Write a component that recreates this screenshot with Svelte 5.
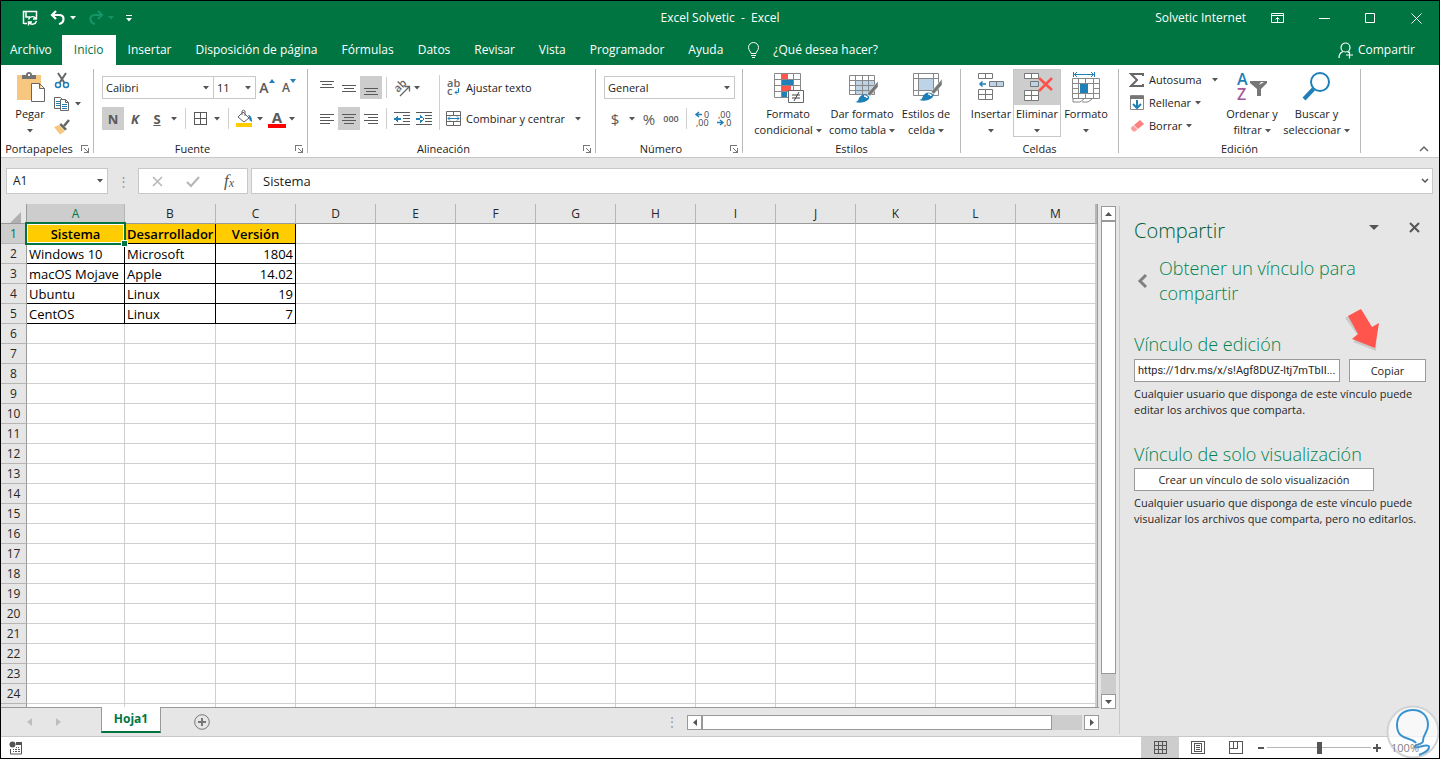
<script>
    const tabs = ["Archivo", "Inicio", "Insertar", "Disposición de página", "Fórmulas", "Datos", "Revisar", "Vista", "Programador", "Ayuda"];
    let activeTab = $state("Inicio");

    const columns = "ABCDEFGHIJKLM".split("");
    const rows = Array.from({ length: 24 }, (_, i) => i + 1);

    // Sheet content, only the first five rows are filled
    const data = [
        ["Sistema", "Desarrollador", "Versión"],
        ["Windows 10", "Microsoft", "1804"],
        ["macOS Mojave", "Apple", "14.02"],
        ["Ubuntu", "Linux", "19"],
        ["CentOS", "Linux", "7"],
    ];

    let formula = $state("Sistema");
    let link = $state("https://1drv.ms/x/s!Agf8DUZ-ltj7mTbII...");
    let zoom = $state(100);
</script>

{#snippet caret()}
    <svg class="caret" width="6" height="4" viewBox="0 0 6 4"><path d="M0 0h6L3 3.5z" fill="currentColor" /></svg>
{/snippet}

{#snippet launcher()}
    <button class="launcher" aria-label="Más opciones">
        <svg width="8" height="8" viewBox="0 0 8 8" fill="none" stroke="#777" shape-rendering="crispEdges">
            <path d="M.5 6V.5H7M7.5 3v4.5H3M3 3l4 4" />
        </svg>
    </button>
{/snippet}

{#snippet lines(a, b, top)}
    <!-- three or four text strokes, a = long, b = short -->
    <svg width="14" height="14" viewBox="0 0 14 14" stroke="#595959" shape-rendering="crispEdges">
        {#each top as y, i}
            <line x1={i % 2 ? b[0] : a[0]} x2={i % 2 ? b[1] : a[1]} y1={y + 0.5} y2={y + 0.5} />
        {/each}
    </svg>
{/snippet}

<div class="window">
    <header class="top">
        <div class="titlebar">
            <div class="quick">
                <button aria-label="Guardar">
                    <svg width="16" height="16" viewBox="0 0 16 16" fill="none" stroke="#fff">
                        <path d="M1.5 14V1.5h13V6M4 2v5h4M2 13.5h3" stroke-width="1.5" />
                        <path d="M6.5 9.5a4.200 4.200 0 0 1 7.500-1M14.500 5.500v3.500H11M14.500 11a4.200 4.200 0 0 1-7.500 1.500M6.500 15.500V12H10" stroke-width="1.4" />
                    </svg>
                </button>
                <button aria-label="Deshacer">
                    <svg width="16" height="16" viewBox="0 0 16 16" fill="none" stroke="#fff" stroke-width="2.2">
                        <path d="M6 1 2 5l4 4M2 5h7q4.500 0 4.500 4T9 14" />
                    </svg>
                    {@render caret()}
                </button>
                <button class="dim" aria-label="Rehacer">
                    <svg width="16" height="16" viewBox="0 0 16 16" fill="none" stroke="currentColor" stroke-width="2.2">
                        <path d="m10 1 4 4-4 4M14 5H7q-4.500 0-4.500 4T7 14" />
                    </svg>
                    {@render caret()}
                </button>
                <button aria-label="Personalizar">
                    <svg width="6" height="7" viewBox="0 0 6 7" fill="#fff"><path d="M0 0h6v1H0zM0 3h6L3 6.500z" /></svg>
                </button>
            </div>
            <h1>Excel Solvetic&nbsp; -&nbsp; Excel</h1>
            <div class="account">
                <span>Solvetic Internet</span>
                <button aria-label="Opciones de la cinta">
                    <svg width="14" height="11" viewBox="0 0 14 11" fill="none" stroke="#fff"><path d="M.5.5h12v9H.5zM.5 2.500h12M6.500 9V4.500M4.500 6.500l2-2 2 2" /></svg>
                </button>
                <button aria-label="Minimizar">
                    <svg width="11" height="11" viewBox="0 0 11 11" stroke="#fff"><path d="M0 5.500h11" /></svg>
                </button>
                <button aria-label="Maximizar">
                    <svg width="11" height="11" viewBox="0 0 11 11" fill="none" stroke="#fff"><path d="M.5.5h9v9h-9z" /></svg>
                </button>
                <button aria-label="Cerrar">
                    <svg width="11" height="11" viewBox="0 0 11 11" stroke="#fff"><path d="m.5.5 10 10M10.500.5l-10 10" /></svg>
                </button>
            </div>
        </div>
        <nav class="tabs">
            {#each tabs as tab}
                <button class="tab" class:active={activeTab === tab} onclick={() => (activeTab = tab)}>{tab}</button>
            {/each}
            <button class="tell">
                <svg width="13" height="17" viewBox="0 0 13 17" fill="none" stroke="#fff"><path d="M4 11.500c0-2-2.500-3-2.500-6a5 5 0 0 1 10 0c0 3-2.500 4-2.500 6zM4 13.500h5M5 15.500h3" /></svg>
                ¿Qué desea hacer?
            </button>
            <button class="share">
                <svg width="16" height="17" viewBox="0 0 16 17" fill="none" stroke="#fff" stroke-width="1.2"><circle cx="7.500" cy="5.500" r="4.500" /><path d="M1 16q0-5 4-6.500M9.500 9.500l2 1.500M8 13h7M11.500 9.500v7" /></svg>
                Compartir
            </button>
        </nav>
    </header>

    <div class="ribbon">
        <section class="group clipboard">
            <div class="body">
                <button class="big paste">
                    <svg width="32" height="32" viewBox="0 0 32 32">
                        <path d="M3 3h24v25H3z" fill="#f8c77f" />
                        <path d="M8 7V3h4q0-3 3-3t3 3h4v4z" fill="#737373" /><path d="M14 2h2v2h-2z" fill="#fff" />
                        <path d="M17.500 11.500h8l5 5v13h-13zM25.500 11.500v5h5" fill="#fff" stroke="#666" />
                    </svg>
                    <span>Pegar<br />{@render caret()}</span>
                </button>
                <div class="stack">
                    <button aria-label="Cortar">
                        <svg width="16" height="16" viewBox="0 0 16 16" fill="none">
                            <path d="m4 0 6.500 10M12 0 5.500 10" stroke="#666" stroke-width="2" />
                            <circle cx="4" cy="12" r="2.500" stroke="#1f7fb8" stroke-width="1.5" /><circle cx="12" cy="12" r="2.500" stroke="#1f7fb8" stroke-width="1.5" />
                        </svg>
                    </button>
                    <button aria-label="Copiar">
                        <svg width="16" height="16" viewBox="0 0 16 16" fill="#fff">
                            <path d="M.5 1.500h6l3 3v8h-9z" stroke="#666" /><path d="M2 5.500h4M2 7.500h4M2 9.500h4" stroke="#1f7fb8" />
                            <path d="M6.500 3.500h5l3 3v8h-8zM11.500 3.500v3h3" stroke="#666" /><path d="M8 8.500h5M8 10.500h5M8 12.500h5" stroke="#1f7fb8" />
                        </svg>
                        {@render caret()}
                    </button>
                    <button aria-label="Copiar formato">
                        <svg width="16" height="16" viewBox="0 0 16 16">
                            <path d="m0 8 5-2 6 6-5 3.500z" fill="#f8c77f" /><path d="m7 4 6 6-2 1.500L5.500 6z" fill="#666" /><path d="m10 7 5-6" stroke="#666" stroke-width="2.5" />
                        </svg>
                    </button>
                </div>
            </div>
            <h2>Portapapeles</h2>
            {@render launcher()}
        </section>
        <i class="divider"></i>

        <section class="group font">
            <div class="body rows">
                <div class="row">
                    <select class="fontname" aria-label="Fuente"><option>Calibri</option></select>
                    <select class="fontsize" aria-label="Tamaño"><option>11</option></select>
                    <button class="tool up" aria-label="Aumentar tamaño">A<svg width="6" height="4" viewBox="0 0 6 4"><path d="M0 4h6L3 0z" fill="#1f7fb8" /></svg></button>
                    <button class="tool up small" aria-label="Disminuir tamaño">A<svg width="6" height="4" viewBox="0 0 6 4"><path d="M0 0h6L3 4z" fill="#1f7fb8" /></svg></button>
                </div>
                <div class="row">
                    <button class="tool on"><b>N</b></button>
                    <button class="tool"><b><em>K</em></b></button>
                    <button class="tool"><b><u>S</u></b></button>
                    <button class="drop" aria-label="Subrayado">{@render caret()}</button>
                    <i class="bar"></i>
                    <button class="tool icon" aria-label="Bordes">
                        <svg width="14" height="14" viewBox="0 0 14 14" fill="none" stroke="#595959" shape-rendering="crispEdges"><path d="M.5.5h12v12H.5zM6.500.5v12M.5 6.500h12" /></svg>
                    </button>
                    <button class="drop" aria-label="Más bordes">{@render caret()}</button>
                    <i class="bar"></i>
                    <button class="tool icon" aria-label="Color de relleno">
                        <svg width="16" height="17" viewBox="0 0 16 17" fill="none">
                            <path d="m2 7 5-5 6 6-5 4zM6 5V1q1.500-1.500 3 0v5" stroke="#666" /><path d="M12 5q4 0 4 7-3-1-3-5z" fill="#1f7fb8" /><path d="M0 13h16v4H0z" fill="#ffcc00" />
                        </svg>
                    </button>
                    <button class="drop" aria-label="Más colores de relleno">{@render caret()}</button>
                    <button class="tool icon color-a" aria-label="Color de fuente"><b>A</b></button>
                    <button class="drop" aria-label="Más colores de fuente">{@render caret()}</button>
                </div>
            </div>
            <h2>Fuente</h2>
            {@render launcher()}
        </section>
        <i class="divider"></i>

        <section class="group align">
            <div class="body">
                <div class="rows left">
                    <div class="row">
                        <button class="tool" aria-label="Alinear arriba">{@render lines([0, 14], [2, 12], [0, 3, 6])}</button>
                        <button class="tool" aria-label="Alinear en medio">{@render lines([0, 14], [2, 12], [4, 7, 10])}</button>
                        <button class="tool on" aria-label="Alinear abajo">{@render lines([0, 14], [2, 12], [7, 10, 13])}</button>
                        <i class="bar"></i>
                        <button class="tool icon" aria-label="Orientación">
                            <svg width="17" height="16" viewBox="0 0 17 16" fill="none" stroke="#666">
                                <text transform="translate(5 13) rotate(-45)" font-size="11" font-weight="600" fill="#666" stroke="none">ab</text>
                                <path d="m7 16 9-9M11.500 6.500h5v5" stroke-width="1.3" />
                            </svg>
                        </button>
                        <button class="drop" aria-label="Más orientaciones">{@render caret()}</button>
                    </div>
                    <div class="row">
                        <button class="tool" aria-label="Izquierda">{@render lines([0, 14], [0, 10], [2, 5, 8, 11])}</button>
                        <button class="tool on" aria-label="Centrar">{@render lines([0, 14], [2, 12], [2, 5, 8, 11])}</button>
                        <button class="tool" aria-label="Derecha">{@render lines([0, 14], [4, 14], [2, 5, 8, 11])}</button>
                        <i class="bar"></i>
                        <button class="tool" aria-label="Disminuir sangría">
                            <svg width="16" height="14" viewBox="0 0 16 14" shape-rendering="crispEdges"><path d="M0 .5h16M9 3.500h7M9 6.500h7M9 9.500h7M0 12.500h16" stroke="#595959" /><path d="M0 6h7v2H0zM0 7l4-4v8z" fill="#1f7fb8" /></svg>
                        </button>
                        <button class="tool" aria-label="Aumentar sangría">
                            <svg width="16" height="14" viewBox="0 0 16 14" shape-rendering="crispEdges"><path d="M0 .5h16M9 3.500h7M9 6.500h7M9 9.500h7M0 12.500h16" stroke="#595959" /><path d="M0 6h7v2H0zM8 7 4 3v8z" fill="#1f7fb8" /></svg>
                        </button>
                    </div>
                </div>
                <i class="bar tall"></i>
                <div class="rows right">
                    <button class="row text">
                        <svg width="16" height="17" viewBox="0 0 16 17"><g font-size="11" font-weight="600" fill="#666"><text x="1" y="8">ab</text><text x="1" y="16">c</text></g><path d="M12.500 9v4.500H9M11 11.500l-2 2 2 2" fill="none" stroke="#1f7fb8" /></svg>
                        Ajustar texto
                    </button>
                    <button class="row text">
                        <svg width="16" height="16" viewBox="0 0 16 16" fill="none" stroke="#666"><path d="M.5.5h14v14H.5zM.5 4.500h14M.5 10.500h14M7.500.5v4M7.500 10.500v4" /><path d="M2 7.500h11M4 5.500l-2 2 2 2M11 5.500l2 2-2 2" stroke="#1f7fb8" /></svg>
                        Combinar y centrar
                        <span class="push">{@render caret()}</span>
                    </button>
                </div>
            </div>
            <h2>Alineación</h2>
            {@render launcher()}
        </section>
        <i class="divider"></i>

        <section class="group number">
            <div class="body rows">
                <div class="row">
                    <select class="format" aria-label="Formato de número"><option>General</option></select>
                </div>
                <div class="row">
                    <button class="tool sign">$</button>
                    <button class="drop" aria-label="Más monedas">{@render caret()}</button>
                    <button class="tool sign">%</button>
                    <button class="tool zeros">000</button>
                    <i class="bar"></i>
                    <button class="tool" aria-label="Aumentar decimales">
                        <svg width="15" height="15" viewBox="0 0 15 15"><g font-size="9" fill="#444"><text x="9" y="7">0</text><text x="1" y="15">,00</text></g><path d="M1 3.500h6M4 1 1 3.500 4 6" fill="none" stroke="#1f7fb8" stroke-width="1.5" /></svg>
                    </button>
                    <button class="tool" aria-label="Disminuir decimales">
                        <svg width="15" height="15" viewBox="0 0 15 15"><g font-size="9" fill="#444"><text x="1" y="7">,00</text><text x="7" y="15">,0</text></g><path d="M0 11.500h6M3 9l3 2.500L3 14" fill="none" stroke="#1f7fb8" stroke-width="1.5" /></svg>
                    </button>
                </div>
            </div>
            <h2>Número</h2>
            {@render launcher()}
        </section>
        <i class="divider"></i>

        <section class="group styles">
            <div class="body">
                <button class="big wide">
                    <svg width="32" height="32" viewBox="0 0 32 32">
                        <path d="M2.500 1.500h26v24h-26zM2.500 7.500h26M2.500 13.500h26M2.500 19.500h26M9.500 1.500v24M21.500 1.500v24" fill="#fff" stroke="#888" />
                        <path d="M10 2h6v5h-6zM10 14h9v5h-9z" fill="#ff554d" /><path d="M10 8h11v5H10zM10 20h5v5h-5z" fill="#1f7fb8" />
                        <path d="M16.500 18.500h15v12h-15z" fill="#fff" stroke="#666" /><path d="M20 23h8M20 26h8M27 20l-5 9" stroke="#444" />
                    </svg>
                    <span>Formato<br />condicional {@render caret()}</span>
                </button>
                <button class="big wide">
                    <svg width="32" height="32" viewBox="0 0 32 32">
                        <path d="M3.500 3.500h25v19h-25z" fill="#fff" /><path d="M9 8h19v14H9z" fill="#bcd3e8" />
                        <path d="M3.500 3.500h25v19h-25zM3.500 8.500h25M3.500 13.500h25M3.500 18.500h25M9.500 3.500v19M16.500 3.500v19M22.500 3.500v19" fill="none" stroke="#888" />
                        <path d="m21 22 11-13v6l-8 9z" fill="#777" stroke="#fff" stroke-width=".5" /><path d="M9 30q3 0 4-4 3-5 8-3 4 2 1 5-5 4-13 2z" fill="#1f7fb8" /><path d="M18 24q3 0 3 2" stroke="#fff" fill="none" stroke-width="1.5" />
                    </svg>
                    <span>Dar formato<br />como tabla {@render caret()}</span>
                </button>
                <button class="big style">
                    <svg width="32" height="32" viewBox="0 0 32 32">
                        <path d="M3.500 1.500h25v22h-25z" fill="#fff" /><path d="M9 7h14v11H9z" fill="#bcd3e8" />
                        <path d="M3.500 1.500h25v22h-25zM3.500 6.500h25M3.500 18.500h25M8.500 1.500v22M23.500 1.500v22" fill="none" stroke="#888" />
                        <path d="m21 20 11-13v6l-8 9z" fill="#777" stroke="#fff" stroke-width=".5" /><path d="M9 28q3 0 4-4 3-5 8-3 4 2 1 5-5 4-13 2z" fill="#1f7fb8" /><path d="M18 22q3 0 3 2" stroke="#fff" fill="none" stroke-width="1.5" />
                    </svg>
                    <span>Estilos de<br />celda {@render caret()}</span>
                </button>
            </div>
            <h2>Estilos</h2>
        </section>
        <i class="divider"></i>

        <section class="group cells">
            <div class="body">
                <button class="big insert">
                    <svg width="32" height="32" viewBox="0 0 32 32" fill="#fff" stroke="#777">
                        <path d="M3.500 1.500h14v5h-14zM10.500 1.500v5M3.500 17.500h14v10h-14zM3.500 22.500h14M10.500 17.500v10" />
                        <path d="M14.500 9.500h14v5h-14zM21.500 9.500v5" fill="#bcd3e8" /><path d="M5 12h6M7.500 9.500 5 12l2.500 2.500" fill="none" stroke="#1f7fb8" stroke-width="1.5" />
                    </svg>
                    <span>Insertar<br />{@render caret()}</span>
                </button>
                <button class="big delete">
                    <svg width="32" height="32" viewBox="0 0 32 32" fill="#fff" stroke="#777">
                        <path d="M3.500 1.500h14v5h-14zM10.500 1.500v5M3.500 18.500h14v10h-14zM3.500 23.500h14M10.500 18.500v10" />
                        <path d="M9.500 9.500h8v5h-8z" fill="#bcd3e8" /><path d="m18 6 13 12M31 6 18 19" fill="none" stroke="#ff5147" stroke-width="2.5" />
                    </svg>
                    <span>Eliminar<br />{@render caret()}</span>
                </button>
                <button class="big size">
                    <svg width="32" height="32" viewBox="0 0 32 32" fill="none" stroke="#888">
                        <path d="M2.500 6.500h27v20h-27zM2.500 11.500h27M2.500 21.500h27M8.500 6.500v20M23.500 6.500v20M15.500 6.500v5M15.500 21.500v5M2.500 16.500h6M23.500 16.500h6M3 27v3h7l4-3M12 30h6l4-3" />
                        <path d="M10 12h8v9h-8z" fill="#1f7fb8" stroke="none" /><path d="M3.500 0v5M24.500 0v5M4 2.500h20M7 0 4.500 2.500 7 5M21 0l2.500 2.500L21 5" stroke="#1f7fb8" />
                    </svg>
                    <span>Formato<br />{@render caret()}</span>
                </button>
            </div>
            <h2>Celdas</h2>
        </section>
        <i class="divider"></i>

        <section class="group edit">
            <div class="body">
                <div class="list">
                    <button>
                        <svg width="16" height="16" viewBox="0 0 16 16" fill="none" stroke="#666" stroke-width="2"><path d="M14 4V2H2l6 6-6 6h12v-2" /></svg>
                        Autosuma <span class="push">{@render caret()}</span>
                    </button>
                    <button>
                        <svg width="16" height="16" viewBox="0 0 16 16" fill="none"><path d="M1.500.5h13v14h-13z" stroke="#888" /><path d="M1 1h14v3H1z" fill="#777" /><path d="M8 5v8M4 9l4 4 4-4" stroke="#1f7fb8" stroke-width="2" /></svg>
                        Rellenar {@render caret()}
                    </button>
                    <button>
                        <svg width="16" height="16" viewBox="0 0 16 16"><path d="m5 7 6-5 4 4-6 5z" fill="#ff8080" /><path d="m2 9.500 2.500-2 4 4-2.500 2H4L2 11z" fill="#ff9c9c" /></svg>
                        Borrar {@render caret()}
                    </button>
                </div>
                <button class="big sort">
                    <svg width="32" height="32" viewBox="0 0 32 32">
                        <g font-size="16" font-weight="600"><text x="1" y="13" fill="#1f7fb8">A</text><text x="1" y="28" fill="#a8589e">Z</text></g>
                        <path d="M14 9h17v2l-6 6v7h-4v-7l-7-6z" fill="#777" /><path d="m23 13 5-3h-3z" fill="#fff" />
                    </svg>
                    <span>Ordenar y<br />filtrar {@render caret()}</span>
                </button>
                <button class="big find">
                    <svg width="32" height="32" viewBox="0 0 32 32" fill="none" stroke="#1f7fb8"><circle cx="19" cy="10" r="9" stroke-width="2" /><path d="M12.500 17 3 27" stroke-width="4" /></svg>
                    <span>Buscar y<br />seleccionar {@render caret()}</span>
                </button>
            </div>
            <h2>Edición</h2>
        </section>
        <i class="divider"></i>
        <button class="collapse" aria-label="Contraer la cinta">
            <svg width="10" height="6" viewBox="0 0 10 6" fill="none" stroke="#666" stroke-width="1.5"><path d="m1 5 4-4 4 4" /></svg>
        </button>
    </div>

    <div class="formulabar">
        <select class="namebox" aria-label="Cuadro de nombres"><option>A1</option></select>
        <span class="grip">⋮</span>
        <div class="fx">
            <button aria-label="Cancelar"><svg width="11" height="11" viewBox="0 0 11 11" stroke="#b5b5b5" stroke-width="1.5"><path d="m1 1 9 9M10 1l-9 9" /></svg></button>
            <button aria-label="Introducir"><svg width="14" height="11" viewBox="0 0 14 11" fill="none" stroke="#b5b5b5" stroke-width="2"><path d="m1 6 4 4 8-9" /></svg></button>
            <button class="fn" aria-label="Insertar función"><em>f</em><small>x</small></button>
        </div>
        <div class="formula">
            <input aria-label="Fórmula" bind:value={formula} />
            <svg width="8" height="6" viewBox="0 0 8 6" fill="none" stroke="#555" stroke-width="1.5"><path d="m1 1 3 3 3-3" /></svg>
        </div>
    </div>

    <div class="workspace">
        <main class="book">
            <div class="sheetrow">
                <div class="sheet">
                    <table>
                        <colgroup>
                            <col class="c-head" /><col class="c-a" /><col class="c-b" />
                            {#each columns.slice(2) as _}<col class="c-n" />{/each}
                            <col />
                        </colgroup>
                        <thead>
                            <tr>
                                <th class="corner"><svg width="11" height="11" viewBox="0 0 11 11"><path d="M11 0v11H0z" fill="#b0b0b0" /></svg></th>
                                {#each columns as col}<th class:sel={col === "A"}>{col}</th>{/each}
                                <th></th>
                            </tr>
                        </thead>
                        <tbody>
                            {#each rows as n, r}
                                <tr class:first={r === 0}>
                                    <th class:sel={n === 1}>{n}</th>
                                    {#each columns as _, c}
                                        <td class:cell={r < data.length && c < 3} class:num={c === 2} class:cursor={r === 0 && c === 0}>{data[r]?.[c] ?? ""}</td>
                                    {/each}
                                    <td></td>
                                </tr>
                            {/each}
                            <tr>
                                <th></th>
                                {#each columns as _}<td></td>{/each}
                                <td></td>
                            </tr>
                        </tbody>
                    </table>
                </div>
                <div class="vscroll">
                    <button aria-label="Subir"><svg width="7" height="4" viewBox="0 0 7 4"><path d="M0 4h7L3.500 0z" fill="#555" /></svg></button>
                    <div class="thumb"></div>
                    <div class="track"></div>
                    <button aria-label="Bajar"><svg width="7" height="4" viewBox="0 0 7 4"><path d="M0 0h7L3.500 4z" fill="#555" /></svg></button>
                </div>
            </div>
            <div class="sheettabs">
                <div class="arrows">
                    <svg width="5" height="8" viewBox="0 0 5 8"><path d="M5 0v8L0 4z" fill="#bdbdbd" /></svg>
                    <svg width="5" height="8" viewBox="0 0 5 8"><path d="M0 0v8l5-4z" fill="#bdbdbd" /></svg>
                </div>
                <button class="sheettab">Hoja1</button>
                <button class="add" aria-label="Hoja nueva">
                    <svg width="16" height="16" viewBox="0 0 16 16" fill="none" stroke="#777"><circle cx="8" cy="8" r="7.300" /><path d="M4 8h8M8 4v8" stroke-width="2" /></svg>
                </button>
                <span class="grip">⋮</span>
                <div class="hscroll">
                    <button aria-label="Izquierda"><svg width="4" height="7" viewBox="0 0 4 7"><path d="M4 0v7L0 3.500z" fill="#555" /></svg></button>
                    <div class="thumb"></div>
                    <div class="track"></div>
                    <button aria-label="Derecha"><svg width="4" height="7" viewBox="0 0 4 7"><path d="M0 0v7l4-3.500z" fill="#555" /></svg></button>
                </div>
            </div>
        </main>

        <aside class="pane">
            <div class="panehead">
                <h3>Compartir</h3>
                <button aria-label="Opciones del panel"><svg width="10" height="5" viewBox="0 0 10 5"><path d="M0 0h10L5 5z" fill="#555" /></svg></button>
                <button aria-label="Cerrar panel"><svg width="11" height="11" viewBox="0 0 11 11" stroke="#555" stroke-width="2"><path d="m1 1 9 9M10 1l-9 9" /></svg></button>
            </div>
            <div class="back">
                <button aria-label="Atrás"><svg width="11" height="16" viewBox="0 0 11 16" fill="none" stroke="#808080" stroke-width="3"><path d="M9 2 3 8l6 6" /></svg></button>
                <h3>Obtener un vínculo para compartir</h3>
            </div>
            <h4><label for="link">Vínculo de edición</label></h4>
            <div class="linkrow">
                <input id="link" bind:value={link} />
                <button class="btn copy">Copiar</button>
                <svg class="pointer" width="36" height="44" viewBox="0 0 36 44">
                    <path d="M1 9 15 1 25 21l8-4-1 25L9 33l6-5z" fill="#cacaca" />
                    <path d="M4 7 17 0l11 18 7-4-4 25-23-9 6-5z" fill="#ff554d" />
                </svg>
            </div>
            <p>Cualquier usuario que disponga de este vínculo puede editar los archivos que comparta.</p>
            <h4 class="second">Vínculo de solo visualización</h4>
            <button class="btn create">Crear un vínculo de solo visualización</button>
            <p>Cualquier usuario que disponga de este vínculo puede visualizar los archivos que comparta, pero no editarlos.</p>
        </aside>
    </div>

    <footer class="status">
        <button class="macro" aria-label="Grabar macro">
            <svg width="14" height="14" viewBox="0 0 14 14"><circle cx="3.500" cy="3.500" r="3" fill="#555" /><path d="M7 1h6v3H7z" fill="#555" /><path d="M1.500 8v5h11V4" fill="none" stroke="#555" /><path d="M7 6.500h1M9 6.500h1M4 8.500h1M6 8.500h2M9 8.500h2M4 10.500h1M6 10.500h2M9 10.500h2" stroke="#555" /></svg>
        </button>
        <button class="view on" aria-label="Normal"><svg width="13" height="13" viewBox="0 0 13 13" fill="none" stroke="#555" shape-rendering="crispEdges"><path d="M.5.5h12v12H.5zM4.500.5v12M8.500.5v12M.5 4.500h12M.5 8.500h12" /></svg></button>
        <button class="view" aria-label="Diseño de página"><svg width="14" height="13" viewBox="0 0 14 13" fill="none" stroke="#555" shape-rendering="crispEdges"><path d="M.5.5h13v12H.5zM3.500 2.500h7v8h-7zM5 4.500h4M5 6.500h4M5 8.500h4" /></svg></button>
        <button class="view" aria-label="Salto de página"><svg width="14" height="13" viewBox="0 0 14 13" fill="none" stroke="#555" shape-rendering="crispEdges"><path d="M.5.5h13v12H.5zM.5 7.500h8M4.500.5v7M8.500.5v7" /></svg></button>
        <button class="step" aria-label="Alejar"><svg width="8" height="8" viewBox="0 0 8 8"><path d="M1 3h6v2H1z" fill="#555" /></svg></button>
        <input type="range" min="0" max="200" aria-label="Zoom" bind:value={zoom} />
        <button class="step" aria-label="Acercar"><svg width="8" height="8" viewBox="0 0 8 8"><path d="M0 3h8v2H0zM3 0h2v8H3z" fill="#555" /></svg></button>
        <span class="percent">{zoom}%</span>
    </footer>

    <div class="badge">
        <svg width="54" height="54" viewBox="0 0 54 54" fill="none">
            <circle cx="27" cy="27" r="25.500" fill="#fff" fill-opacity=".7" stroke="#cfd3d6" stroke-width="2" />
            <path d="M30 38C26 32 11 36 11 20 11 10 18 5 27 5s15 6 15 15c0 8-5 9-5 16 0 4-9 3-8 6 1 2 14-4 14 0s-5 6-10 8" stroke="#3a93cf" stroke-width="2" />
        </svg>
    </div>
</div>

<style>
    :global(body) {
        margin: 0;
        font-family: "Open Sans", "Noto Sans", sans-serif;
        font-size: 12px;
        line-height: 16px;
        color: #1c1c1c;
    }

    button, input, select {
        font: inherit;
        color: inherit;
        margin: 0;
        padding: 0;
        border: 0;
        border-radius: 0;
        background: none;
        box-sizing: border-box;
    }
    button { display: flex; align-items: center; justify-content: center; white-space: nowrap; }
    svg { flex: none; display: block; overflow: visible; }
    h1, h2, h3, h4, p { margin: 0; font-weight: 400; font-size: inherit; }
    .caret { display: inline-block; vertical-align: middle; color: #555; }

    .window {
        position: relative;
        display: flex;
        flex-direction: column;
        height: 100vh;
        box-sizing: border-box;
        border: 1px solid #000;
        background: #e6e6e6;
        overflow: hidden;
    }

    /* === TITLE AND TABS === */
    .top { flex: none; background: #007542; color: #fff; }
    .top .caret { color: inherit; }
    .titlebar {
        display: grid;
        grid-template-columns: 1fr auto 1fr;
        align-items: center;
        height: 34px;
    }
    .quick { display: flex; align-items: center; gap: 12px; padding-left: 21px; }
    .quick button { gap: 4px; }
    .quick .dim { color: #129665; }
    .account { display: flex; align-items: center; justify-content: flex-end; }
    .account span { margin-right: 9px; }
    .account button { width: 46px; height: 30px; }
    .tabs { display: flex; height: 30px; }
    .tab { padding: 0 12px; }
    .tab:first-child { padding: 0 10px 0 9px; }
    .tab.active { background: #fff; color: #007542; }
    .tell { gap: 13px; margin-left: 12px; }
    .share { gap: 4px; margin-left: auto; padding-right: 24px; }

    /* === RIBBON === */
    .ribbon {
        flex: none;
        display: flex;
        height: 92px;
        background: #fff;
        border-bottom: 1px solid #c8c8c8;
        font-size: 11px;
    }
    .divider { flex: none; width: 1px; height: 84px; margin-top: 4px; background: #b9b9b9; }
    .group {
        flex: none;
        display: grid;
        grid-template: 72px 16px / 1fr auto;
        box-sizing: border-box;
        padding-top: 4px;
    }
    .group h2 { grid-column: 1; text-align: center; }
    .body { grid-column: 1 / 3; display: flex; padding-left: 8px; }
    .launcher { width: 16px; }
    .clipboard { width: 92px; }
    .font { width: 213px; }
    .align { width: 287px; }
    .number { width: 146px; }
    .styles { width: 217px; }
    .cells { width: 157px; }
    .edit { width: 241px; }
    .clipboard .body { padding-left: 5px; }

    .big { flex-direction: column; justify-content: flex-start; gap: 2px; padding-top: 3px; text-align: center; }
    .paste { width: 48px; }
    .wide { width: 74px; }
    .style { width: 54px; }
    .insert { width: 44px; }
    .delete {
        width: 48px;
        height: 68px;
        padding-top: 2px;
        border: 1px solid #c8c8c8;
        background: linear-gradient(#cdcdcd 35px, #fff 35px);
    }
    .size { width: 50px; }
    .sort { width: 60px; }
    .find { width: 69px; }

    .stack { display: flex; flex-direction: column; }
    .stack button { height: 23px; gap: 5px; justify-content: flex-start; }

    .rows { display: flex; flex-direction: column; gap: 8px; padding-top: 7px; }
    .row { display: flex; align-items: center; height: 23px; }
    .tool { width: 22px; height: 23px; font-size: 13px; color: #595959; }
    .tool.on { background: #cdcdcd; }
    .tool.icon { width: 20px; }
    .drop { width: 12px; height: 23px; }
    .tool.up { align-items: flex-start; font-weight: 600; font-size: 14px; line-height: 23px; }
    .tool.up svg { margin-top: 3px; }
    .tool.up.small { font-size: 12px; }
    .color-a { border-bottom: 4px solid #ff0000; height: 18px; margin-left: 2px; }
    .tool.color-a { width: 18px; font-size: 15px; }
    .tool.sign { font-size: 15px; }
    .tool.zeros { font-size: 9px; font-weight: 600; }
    .bar { flex: none; width: 1px; height: 21px; margin: 0 5px; background: #cfcfcf; }
    .align .bar, .number .bar { margin: 0 4px; }
    .align .tall { height: 55px; margin: 6px 0 0; }
    .left { width: 123px; }
    .right { padding-left: 6px; }
    .text { gap: 4px; justify-content: flex-start; }
    .push { margin-left: 6px; }
    .caret, .push { line-height: 4px; }

    select {
        appearance: none;
        height: 23px;
        padding: 0 3px;
        border: 1px solid #c8c8c8;
        background: #fff url("data:image/svg+xml,%3Csvg xmlns='http://www.w3.org/2000/svg' width='6' height='4'%3E%3Cpath d='M0 0h6L3 3.5z' fill='%23555'/%3E%3C/svg%3E") no-repeat right 4px center;
    }
    .fontname { width: 112px; }
    .fontsize { width: 43px; margin-left: -1px; }
    .format { width: 131px; }

    .list { width: 95px; margin-top: -1px; }
    .list button { width: 95px; height: 23px; gap: 4px; padding-left: 2px; justify-content: flex-start; }
    .collapse { margin: auto 10px 5px auto; }

    /* === FORMULA BAR === */
    .formulabar { flex: none; display: flex; padding: 10px 6px 10px 5px; font-size: 13px; }
    .namebox { width: 102px; height: 26px; padding-left: 6px; font-size: 12px; }
    .grip { width: 30px; text-align: center; line-height: 26px; color: #999; }
    .fx { display: flex; width: 110px; box-sizing: border-box; border: 1px solid #c8c8c8; background: #fff; margin-right: 3px; }
    .fx button { flex: 1; }
    .fn { font-family: "Liberation Serif", serif; font-size: 17px; color: #555; }
    .fn small { font-size: 12px; font-style: italic; margin-top: 4px; }
    .formula { flex: 1; display: flex; align-items: center; padding: 0 3px 0 11px; border: 1px solid #c8c8c8; background: #fff; }
    .formula input { flex: 1; height: 24px; outline: 0; }

    /* === SHEET === */
    .workspace { flex: 1; min-height: 0; display: flex; }
    .book { flex: 1; min-width: 0; display: flex; flex-direction: column; }
    .sheetrow { flex: 1; min-height: 0; display: flex; gap: 3px; padding-right: 3px; }
    .sheet { flex: 1; min-width: 0; overflow: hidden; border-right: 1px solid #999; background: #fff; }
    table { table-layout: fixed; width: 100%; border-collapse: separate; border-spacing: 0; font-size: 13px; color: #000; }
    .c-head { width: 26px; }
    .c-a { width: 98px; }
    .c-b { width: 91px; }
    .c-n { width: 80px; }
    th, td {
        height: 20px;
        padding: 0 2px;
        box-sizing: border-box;
        border-right: 1px solid #cfcfcf;
        border-bottom: 1px solid #cfcfcf;
        font-weight: 400;
        line-height: 18px;
        white-space: nowrap;
    }
    th { background: #e6e6e6; border-color: #b5b5b5; color: #262626; font-size: 12px; }
    th:first-child { border-right-color: #999; }
    thead th { border-bottom-color: #999; }
    .sel { background: #cdcdcd; color: #007542; }
    .corner { padding-left: 9px; vertical-align: bottom; }
    .cell { border-color: #000; }
    .num { text-align: right; }
    .first .cell { background: #ffcc00; font-weight: 600; text-align: center; }
    .cursor { position: relative; box-shadow: inset 0 0 0 1px #fff; }
    .cursor::before {
        content: "";
        position: absolute;
        inset: -2px;
        border: 2px solid #007542;
    }
    .cursor::after {
        content: "";
        position: absolute;
        right: -4px;
        bottom: -4px;
        width: 5px;
        height: 5px;
        border: 1px solid #fff;
        background: #007542;
    }

    .vscroll { display: flex; flex-direction: column; width: 15px; padding-top: 2px; margin-bottom: -2px; }
    .vscroll button, .hscroll button { flex: none; width: 15px; height: 15px; border: 1px solid #999; background: #fff; }
    .thumb { box-sizing: border-box; border: 1px solid #999; background: #fff; }
    .track { background: #cdcdcd; }
    .vscroll .thumb { flex: 1; }
    .vscroll .track { height: 20px; }

    .sheettabs {
        flex: none;
        display: flex;
        align-items: center;
        height: 28px;
        margin-right: 20px;
        border-top: 1px solid #999;
    }
    .arrows { display: flex; gap: 24px; width: 100px; box-sizing: border-box; padding-left: 26px; }
    .sheettab {
        align-self: flex-start;
        width: 60px;
        height: 26px;
        margin-top: -1px;
        border: 1px solid #999;
        border-top: 0;
        border-bottom: 2px solid #007542;
        background: #fff;
        color: #007542;
        font-size: 12px;
        font-weight: 700;
    }
    .add { margin-left: 33px; }
    .sheettabs .grip { margin-left: auto; }
    .hscroll { display: flex; flex: 0 1 412px; }
    .hscroll .thumb { flex: 1; }
    .hscroll .track { width: 30px; margin-right: 2px; }

    /* === SHARE PANE === */
    .pane {
        flex: none;
        width: 320px;
        box-sizing: border-box;
        margin: 2px 0;
        padding: 0 13px 0 14px;
        border-left: 1px solid #c8c8c8;
        color: #262626;
        font-size: 11px;
    }
    .pane h3, .pane h4 { font-weight: 300; font-size: 18px; color: #00834f; }
    .pane h3 { line-height: 25px; }
    .pane h4 { line-height: 24px; margin-top: 26px; }
    .pane h4.second { margin-top: 24px; margin-bottom: 2px; }
    .panehead { display: flex; align-items: center; gap: 30px; padding-top: 12px; }
    .pane .panehead h3 { margin-right: auto; color: #005e37; font-size: 20px; }
    .panehead button { height: 11px; margin-right: 6px; margin-top: -6px; }
    .panehead button + button { margin-left: -6px; }
    .back { display: flex; align-items: center; gap: 11px; padding: 13px 40px 0 3px; }
    .linkrow { position: relative; display: flex; gap: 9px; margin-top: 3px; }
    .linkrow input { flex: 1; min-width: 0; height: 23px; padding: 0 3px; border: 1px solid #999; background: #fff; font-family: Roboto, sans-serif; }
    .btn { height: 23px; border: 1px solid #999; background: #fff; }
    .copy { width: 77px; }
    .create { width: 240px; }
    .pane p { margin-top: 4px; }
    .pointer { position: absolute; right: 46px; bottom: 29px; }

    /* === STATUS BAR === */
    .status {
        flex: none;
        display: flex;
        align-items: center;
        height: 21px;
        padding-right: 20px;
        border-top: 1px solid #c8c8c8;
        background: #fff;
    }
    .macro { margin: 0 auto 0 8px; }
    .view { width: 38px; height: 21px; }
    .view.on { background: #cdcdcd; }
    .step { width: 12px; }
    input[type="range"] { appearance: none; width: 104px; height: 13px; background: linear-gradient(#b5b5b5, #b5b5b5) no-repeat center / 100% 1px; }
    input[type="range"]::-webkit-slider-thumb { appearance: none; width: 5px; height: 12px; background: #555; }
    .percent { position: relative; z-index: 2; margin-left: 8px; color: #808080; font-size: 11px; }
    .badge { position: absolute; z-index: 1; right: -1px; bottom: -1px; }
</style>
